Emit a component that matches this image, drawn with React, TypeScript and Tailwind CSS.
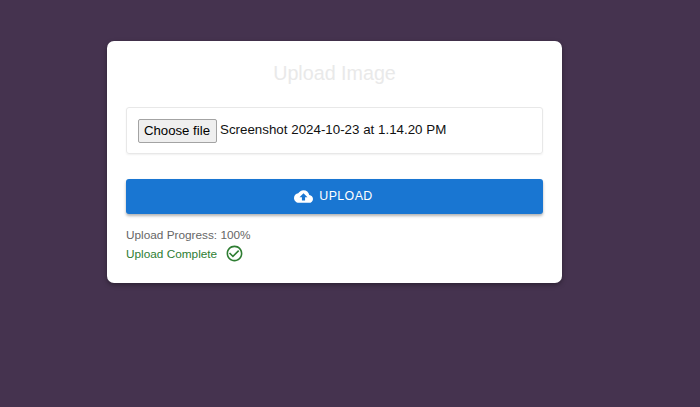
function CloudUpload() {
  return (
    <svg viewBox="0 0 24 24" className="w-[19px] h-[19px] fill-white">
      <path d="M19.35 10.04C18.67 6.59 15.64 4 12 4 9.11 4 6.6 5.64 5.35 8.04 2.34 8.36 0 10.91 0 14c0 3.31 2.69 6 6 6h13c2.76 0 5-2.24 5-5 0-2.64-2.05-4.78-4.65-4.96zM14 13v4h-4v-4H7l5-5 5 5h-3z" />
    </svg>
  );
}

function CheckOutline() {
  return (
    <svg viewBox="0 0 24 24" className="w-[19px] h-[19px] fill-[#2e7d32]">
      <path d="M16.59 7.58 10 14.17l-3.59-3.58L5 12l5 5 8-8zM12 2C6.48 2 2 6.48 2 12s4.48 10 10 10 10-4.48 10-10S17.52 2 12 2zm0 18c-4.42 0-8-3.58-8-8s3.58-8 8-8 8 3.58 8 8-3.58 8-8 8z" />
    </svg>
  );
}

export default function App() {
  return (
    <div className="h-[407px] bg-[#45334f] pt-[41px] font-['Liberation_Sans',sans-serif]">
      <div className="ml-[107px] w-[455px] h-[242px] bg-white rounded-[7px] px-[19px] shadow-[0_2px_5px_rgba(0,0,0,0.35)]">
        <h1 className="pt-[20px] h-[66px] text-center text-[19.7px] leading-[24px] text-[#e9e9e9]">Upload Image</h1>

        <div className="h-[47px] border border-[#e8e8e8] rounded-[3px] flex items-center pl-[11px] shadow-[0_1px_2px_rgba(0,0,0,0.06)]">
          <button className="h-[24px] w-[79px] pr-[1px] bg-[#efefef] border border-[#a3a3a3] rounded-[2px] text-[13.2px] text-black">
            Choose file
          </button>
          <span className="ml-[3px] text-[13.35px] text-[#111111] whitespace-nowrap">Screenshot 2024-10-23 at 1.14.20 PM</span>
        </div>

        <button className="mt-[25px] w-full h-[35px] pr-[2px] bg-[#1976d2] rounded-[3px] flex items-center justify-center gap-[6px] text-white text-[12.4px] tracking-[0.4px] shadow-[0_2px_3px_rgba(0,0,0,0.3)]">
          <CloudUpload />
          <span>UPLOAD</span>
        </button>

        <p className="mt-[13px] text-[11.8px] leading-[16px] text-[#666666]">Upload Progress: 100%</p>
        <div className="mt-[1px] flex items-center gap-[8px] text-[11.8px] leading-[16px] text-[#2e7d32]">
          <span>Upload Complete</span>
          <CheckOutline />
        </div>
      </div>
    </div>
  );
}
